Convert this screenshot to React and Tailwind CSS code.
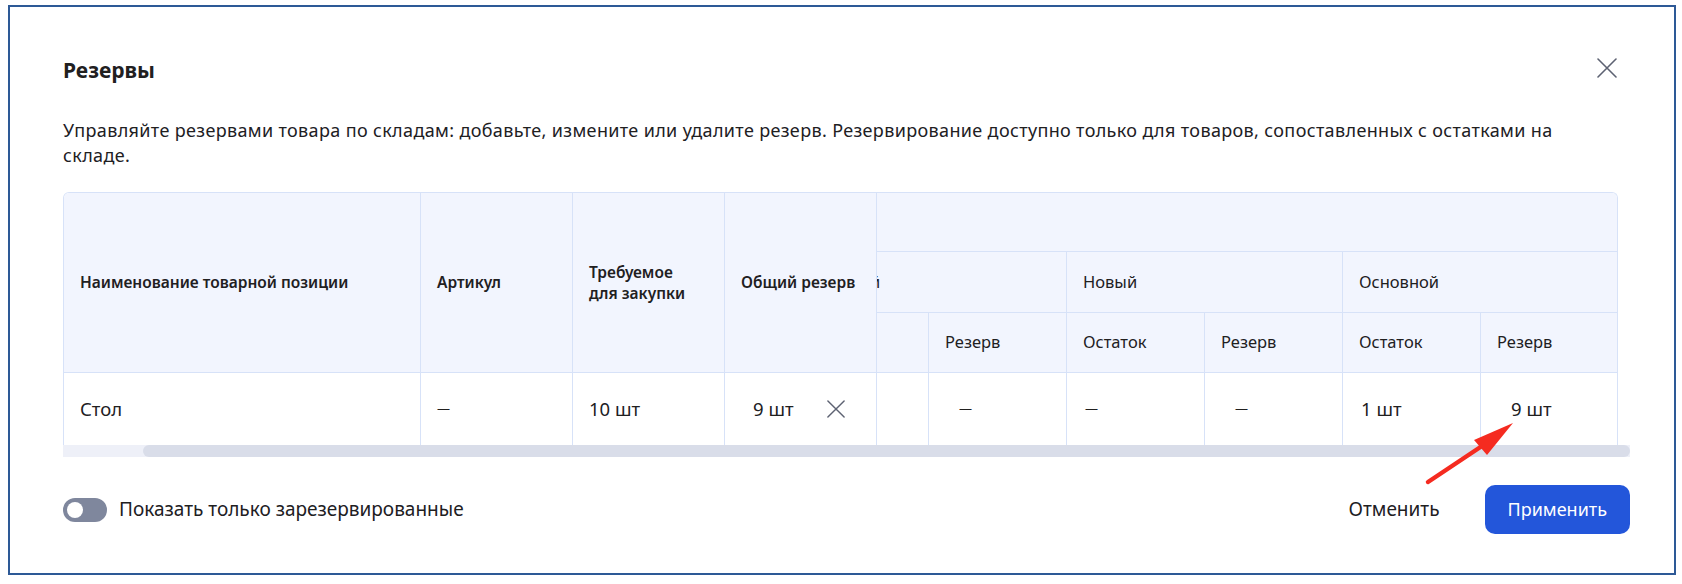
import React from 'react'

const CloseIcon = ({ size = 20, className = '' }) => (
  <svg width={size} height={size} viewBox="0 0 20 20" className={className} fill="none">
    <path d="M1 1L19 19M19 1L1 19" stroke="currentColor" strokeWidth="1.6" strokeLinecap="round" />
  </svg>
)

const Dash = () => <span className="text-[13px]">—</span>

const WAREHOUSES = [
  { name: 'Сборный', stock: <Dash />, reserve: <Dash /> },
  { name: 'Новый', stock: <Dash />, reserve: <Dash /> },
  { name: 'Основной', stock: '1 шт', reserve: '9 шт' },
]

const line = 'border-[#d7e2f8]'

function StickyColumns() {
  const head = `border-r border-b ${line} bg-[#f2f5fe] flex items-center pl-4 pr-3 text-[15.5px] font-semibold leading-[21px]`
  const cell = `border-r ${line} flex items-center text-[18.5px]`
  return (
    <div className="grid shrink-0 grid-cols-[357px_152px_152px_152px] grid-rows-[180px_72px]">
      <div className={head}>Наименование товарной позиции</div>
      <div className={head}>Артикул</div>
      <div className={head}>Требуемое<br />для закупки</div>
      <div className={head}>Общий резерв</div>
      <div className={`${cell} pl-4`}>Стол</div>
      <div className={`${cell} pl-4`}><Dash /></div>
      <div className={`${cell} pl-4`}>10 шт</div>
      <div className={`${cell} justify-between pl-[28px] pr-[31px]`}>
        <span>9 шт</span>
        <CloseIcon size={18} className="text-[#5d6272]" />
      </div>
    </div>
  )
}

function WarehouseColumns() {
  return (
    <div className="min-w-0 flex-1 overflow-hidden">
      {/* scrolled part of the table */}
      <div className="-ml-[86px] w-[828px]">
        <div className={`h-[59px] border-b ${line} bg-[#f2f5fe]`} />
        <div className={`flex h-[61px] border-b ${line} bg-[#f2f5fe]`}>
          {WAREHOUSES.map(w => (
            <div key={w.name} className={`flex w-[276px] shrink-0 items-center border-r ${line} pl-4 text-[16.5px]`}>
              {w.name}
            </div>
          ))}
        </div>
        <div className={`flex h-[60px] border-b ${line} bg-[#f2f5fe]`}>
          {WAREHOUSES.map(w => (
            <React.Fragment key={w.name}>
              <div className={`flex w-[138px] shrink-0 items-center border-r ${line} pl-4 text-[16.5px]`}>Остаток</div>
              <div className={`flex w-[138px] shrink-0 items-center border-r ${line} pl-4 text-[16.5px]`}>Резерв</div>
            </React.Fragment>
          ))}
        </div>
        <div className="flex h-[72px]">
          {WAREHOUSES.map(w => (
            <React.Fragment key={w.name}>
              <div className={`flex w-[138px] shrink-0 items-center border-r ${line} pl-[18px] text-[18.5px]`}>{w.stock}</div>
              <div className={`flex w-[138px] shrink-0 items-center border-r ${line} pl-[30px] text-[18.5px]`}>{w.reserve}</div>
            </React.Fragment>
          ))}
        </div>
      </div>
    </div>
  )
}

function ReserveTable() {
  return (
    <div className="mt-[24px] w-[1567px]">
      <div className={`flex w-[1555px] overflow-hidden rounded-t-[6px] border-x border-t ${line}`}>
        <StickyColumns />
        <WarehouseColumns />
      </div>
      <div className="h-[12px] bg-[#eef0f8]">
        <div className="ml-[80px] h-full rounded-full bg-[#d9dde9]" />
      </div>
    </div>
  )
}

export default function App() {
  return (
    <div className="relative h-[584px] w-[1682px] bg-white pl-[8px] pt-[5px] font-['Noto_Sans',sans-serif] text-[#21201f]">
      <div className="flex h-[570px] w-[1668px] flex-col border-2 border-[#2d5996] pl-[53px] pr-[44px]">
        <div className="flex items-start justify-between pt-[49px]">
          <h2 className="text-[21px] font-bold leading-[28px]">Резервы</h2>
          <button className="mr-[13px] mt-[2px] text-[#5d6272]">
            <CloseIcon />
          </button>
        </div>
        <p className="mt-[34px] max-w-[1520px] text-[18px] leading-[25px] tracking-[0.35px]">
          Управляйте резервами товара по складам: добавьте, измените или удалите резерв. Резервирование доступно только для товаров, сопоставленных с остатками на складе.
        </p>
        <ReserveTable />
        <div className="mt-[28px] flex items-center justify-between">
          <label className="flex items-center gap-[12px] text-[19px]">
            <span className="flex h-[24px] w-[44px] items-center rounded-full bg-[#7f879d]">
              <span className="ml-[4px] h-[16px] w-[16px] rounded-full bg-white" />
            </span>
            Показать только зарезервированные
          </label>
          <div className="flex items-center gap-[23px]">
            <button className="h-[49px] px-[22px] text-[19px]">Отменить</button>
            <button className="h-[49px] rounded-[10px] bg-[#2356da] px-[23px] text-[18px] text-white">Применить</button>
          </div>
        </div>
      </div>

      {/* annotation arrow */}
      <svg className="pointer-events-none absolute left-0 top-0" width="1682" height="584">
        <path d="M1428 482L1482 446" stroke="#f52b20" strokeWidth="4.5" strokeLinecap="round" />
        <path d="M1513 423L1474 440L1487 455Z" fill="#f52b20" />
      </svg>
    </div>
  )
}
